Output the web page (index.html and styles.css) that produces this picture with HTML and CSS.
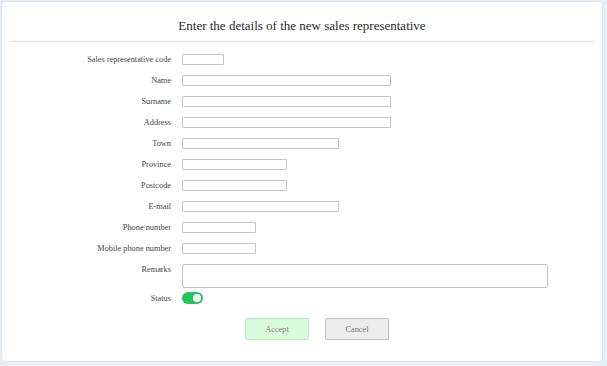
FILE: index.html
```html
<!DOCTYPE html>
<html lang="en">

<head>
    <meta charset="UTF-8">
    <meta name="viewport" content="width=device-width, initial-scale=1.0">
    <title>New sales representative</title>

    <!-- CSS Styles -->
    <link rel="stylesheet" href="styles.css">
</head>

<body>
    <div class="card">
        <h1 class="title">Enter the details of the new sales representative</h1>

        <form class="rep-form">
            <div class="row">
                <label>Sales representative code</label>
                <input type="text" class="w-code">
            </div>
            <div class="row">
                <label>Name</label>
                <input type="text" class="w-long">
            </div>
            <div class="row">
                <label>Surname</label>
                <input type="text" class="w-long">
            </div>
            <div class="row">
                <label>Address</label>
                <input type="text" class="w-long">
            </div>
            <div class="row">
                <label>Town</label>
                <input type="text" class="w-mid">
            </div>
            <div class="row">
                <label>Province</label>
                <input type="text" class="w-short">
            </div>
            <div class="row">
                <label>Postcode</label>
                <input type="text" class="w-short">
            </div>
            <div class="row">
                <label>E-mail</label>
                <input type="text" class="w-mid">
            </div>
            <div class="row">
                <label>Phone number</label>
                <input type="text" class="w-phone">
            </div>
            <div class="row">
                <label>Mobile phone number</label>
                <input type="text" class="w-phone">
            </div>
            <div class="row row-top">
                <label>Remarks</label>
                <textarea></textarea>
            </div>
            <div class="row row-status">
                <label>Status</label>
                <span class="toggle"><span class="knob"></span></span>
            </div>

            <div class="actions">
                <button type="button" class="btn btn-accept">Accept</button>
                <button type="button" class="btn btn-cancel">Cancel</button>
            </div>
        </form>
    </div>
</body>

</html>
```

FILE: styles.css
```css
/* Colours */
:root {
    --page-bg: #e8eff6;
    --card-bg: #ffffff;
    --line: #dfe2e5;
    --input-border: #c4c4c4;
    --text: #444444;
}

body {
    margin: 0;
    background: var(--page-bg);
    font-family: "Times New Roman", "Liberation Serif", serif;
    color: var(--text);
}

/* Card around the form */
.card {
    margin: 1px 4px 4px 1px;
    height: 361px;
    box-sizing: border-box;
    background: var(--card-bg);
    border: 1px solid #dde3ea;
    border-radius: 4px;
}

.title {
    margin: 0 8px;
    padding: 16px 0 7px;
    font-family: "Times New Roman", "Liberation Serif", serif;
    font-size: 13px;
    line-height: 16px;
    font-weight: normal;
    text-align: center;
    color: #2a2a2a;
    border-bottom: 1px solid var(--line);
}

/* Form rows */
.rep-form {
    padding-top: 7px;
}

.row {
    display: flex;
    align-items: center;
    gap: 11px;
    height: 21px;
}

.row label {
    width: 169px;
    text-align: right;
    font-family: "Times New Roman", "Liberation Serif", serif;
    font-size: 8.3px;
    color: var(--text);
}

.row input {
    height: 11px;
    box-sizing: border-box;
    margin: 0;
    padding: 0 2px;
    border: 1px solid var(--input-border);
    border-radius: 1px;
    background: #fff;
}

.w-code { width: 42px; }
.w-long { width: 209px; }
.w-mid { width: 157px; }
.w-short { width: 105px; }
.w-phone { width: 74px; }

.row-top {
    align-items: flex-start;
    height: 29px;
    padding-top: 5px;
    box-sizing: border-box;
}

.row-top label {
    padding-top: 1px;
}

.row textarea {
    width: 366px;
    height: 24px;
    box-sizing: border-box;
    margin: 0;
    border: 1px solid var(--input-border);
    border-radius: 2px;
    resize: none;
}

.row-status {
    height: 20px;
}

/* Status switch */
.toggle {
    position: relative;
    display: inline-block;
    width: 21px;
    height: 12px;
    border-radius: 6px;
    background: #22c45e;
}

.toggle .knob {
    position: absolute;
    top: 2px;
    right: 2px;
    width: 8px;
    height: 8px;
    border-radius: 50%;
    background: #fff;
}

/* Buttons */
.actions {
    display: flex;
    gap: 16px;
    padding: 10px 0 0 243px;
}

.btn {
    width: 64px;
    height: 22px;
    padding: 0;
    font-family: "Times New Roman", "Liberation Serif", serif;
    font-size: 8.3px;
    color: #888;
    border-radius: 2px;
}

.btn-accept {
    background: #d8fbdc;
    border: 1px solid #b8e6bf;
}

.btn-cancel {
    background: #ececec;
    border: 1px solid #bdbdbd;
    color: #777;
}
```
